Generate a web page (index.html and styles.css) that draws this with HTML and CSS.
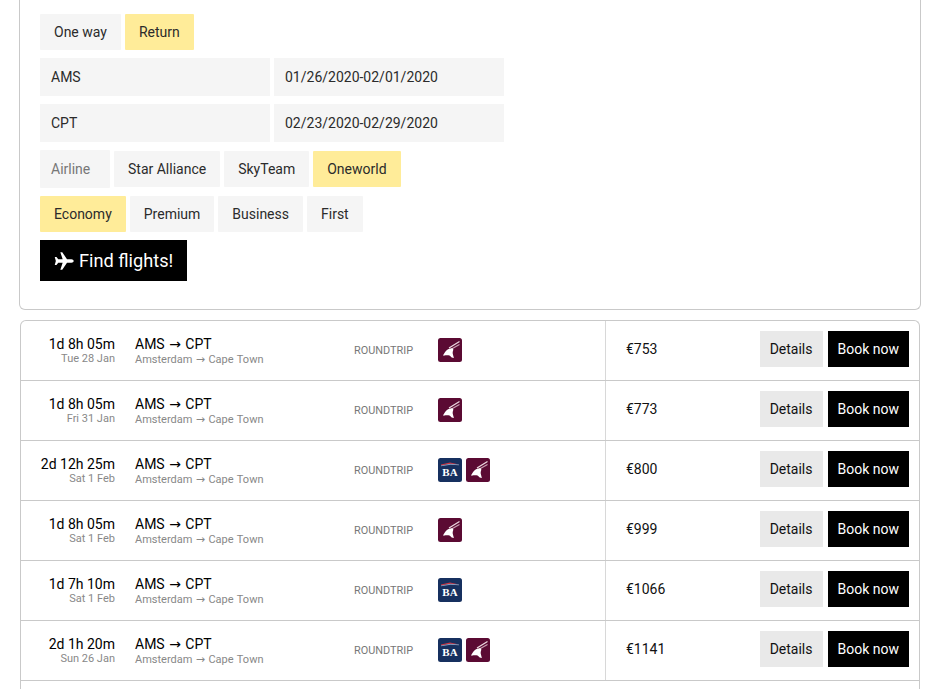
FILE: index.html
```html
<!DOCTYPE html>
<html lang="en">
<head>
<meta charset="utf-8">
<title>Find flights</title>
<link rel="stylesheet" href="styles.css">
</head>
<body>
<svg class="defs" width="0" height="0" aria-hidden="true">
  <symbol id="qr" viewBox="0 0 24 24">
    <rect width="24" height="24" rx="2.500" fill="#5b0a33"/>
    <path d="M11 10 21.500 3.500" stroke="#ecd8e0" stroke-width="1.300" fill="none"/>
    <path d="M13.500 11 21.500 6.500" stroke="#c9a3b4" stroke-width="1.100" fill="none"/>
    <path d="M5 17.500C6 15.500 7.500 13 9 12c1.500-1.200 3.500-2 5-1.800 1.200.2 1.600 1 1.200 2-.5 1.200-.7 2.500-.3 4 .3 1.300.7 2.500 1 3.800l-2.200-.5c-.7-.8-1.200-1.500-2.200-2-1-.4-2-.3-3-.3-.7 0-1.300.2-2 .4-.6.1-1 0-1.500-.1Z" fill="#fff"/>
  </symbol>
  <symbol id="ba" viewBox="0 0 24 24">
    <rect width="24" height="24" rx="2.500" fill="#16305f"/>
    <path d="M3 6.500 12 4.500 21 6.500 12.500 5.800 3 7.500Z" fill="#d0343f"/>
    <path d="M3 7.500 12.500 5.800 21 6.500v.8L12.500 6.800 3 8.300Z" fill="#8fa3c4"/>
  </symbol>
</svg>

<section class="search">
  <div class="chips">
    <span class="chip">One way</span>
    <span class="chip on">Return</span>
  </div>
  <div class="fields">
    <span class="field">AMS</span>
    <span class="field date">01/26/2020-02/01/2020</span>
  </div>
  <div class="fields">
    <span class="field">CPT</span>
    <span class="field date">02/23/2020-02/29/2020</span>
  </div>
  <div class="chips tall">
    <span class="chip label">Airline</span>
    <span class="chip">Star Alliance</span>
    <span class="chip">SkyTeam</span>
    <span class="chip on">Oneworld</span>
  </div>
  <div class="chips">
    <span class="chip on">Economy</span>
    <span class="chip">Premium</span>
    <span class="chip">Business</span>
    <span class="chip">First</span>
  </div>
  <button class="find" type="button">
    <svg class="plane" viewBox="0 0 24 24" aria-hidden="true"><path d="M23.600 12c0-1.100-1.300-2-2.700-2h-5.300L9.900 1.400H7.600l2.800 8.600H5.100L3 7.300H.9L2.200 12 .9 16.700H3L5.100 14h5.300l-2.800 8.600h2.300l5.700-8.600h5.300c1.400 0 2.700-.9 2.700-2Z" fill="#fff"/></svg>
    Find flights!
  </button>
</section>

<section class="results">
  <article class="row">
    <div class="time"><div class="dur">1d 8h 05m</div><div class="day">Tue 28 Jan</div></div>
    <div class="route"><div class="codes">AMS → CPT</div><div class="cities">Amsterdam → Cape Town</div></div>
    <div class="kind">ROUNDTRIP</div>
    <div class="logos"><svg class="logo"><use href="#qr"/></svg></div>
    <div class="price"><span class="amount">€753</span></div>
    <div class="actions"><span class="details">Details</span><span class="book">Book now</span></div>
  </article>
  <article class="row">
    <div class="time"><div class="dur">1d 8h 05m</div><div class="day">Fri 31 Jan</div></div>
    <div class="route"><div class="codes">AMS → CPT</div><div class="cities">Amsterdam → Cape Town</div></div>
    <div class="kind">ROUNDTRIP</div>
    <div class="logos"><svg class="logo"><use href="#qr"/></svg></div>
    <div class="price"><span class="amount">€773</span></div>
    <div class="actions"><span class="details">Details</span><span class="book">Book now</span></div>
  </article>
  <article class="row">
    <div class="time"><div class="dur">2d 12h 25m</div><div class="day">Sat 1 Feb</div></div>
    <div class="route"><div class="codes">AMS → CPT</div><div class="cities">Amsterdam → Cape Town</div></div>
    <div class="kind">ROUNDTRIP</div>
    <div class="logos"><span class="ba"><svg class="logo"><use href="#ba"/></svg><span class="ba-text">BA</span></span><svg class="logo"><use href="#qr"/></svg></div>
    <div class="price"><span class="amount">€800</span></div>
    <div class="actions"><span class="details">Details</span><span class="book">Book now</span></div>
  </article>
  <article class="row">
    <div class="time"><div class="dur">1d 8h 05m</div><div class="day">Sat 1 Feb</div></div>
    <div class="route"><div class="codes">AMS → CPT</div><div class="cities">Amsterdam → Cape Town</div></div>
    <div class="kind">ROUNDTRIP</div>
    <div class="logos"><svg class="logo"><use href="#qr"/></svg></div>
    <div class="price"><span class="amount">€999</span></div>
    <div class="actions"><span class="details">Details</span><span class="book">Book now</span></div>
  </article>
  <article class="row">
    <div class="time"><div class="dur">1d 7h 10m</div><div class="day">Sat 1 Feb</div></div>
    <div class="route"><div class="codes">AMS → CPT</div><div class="cities">Amsterdam → Cape Town</div></div>
    <div class="kind">ROUNDTRIP</div>
    <div class="logos"><span class="ba"><svg class="logo"><use href="#ba"/></svg><span class="ba-text">BA</span></span></div>
    <div class="price"><span class="amount">€1066</span></div>
    <div class="actions"><span class="details">Details</span><span class="book">Book now</span></div>
  </article>
  <article class="row">
    <div class="time"><div class="dur">2d 1h 20m</div><div class="day">Sun 26 Jan</div></div>
    <div class="route"><div class="codes">AMS → CPT</div><div class="cities">Amsterdam → Cape Town</div></div>
    <div class="kind">ROUNDTRIP</div>
    <div class="logos"><span class="ba"><svg class="logo"><use href="#ba"/></svg><span class="ba-text">BA</span></span><svg class="logo"><use href="#qr"/></svg></div>
    <div class="price"><span class="amount">€1141</span></div>
    <div class="actions"><span class="details">Details</span><span class="book">Book now</span></div>
  </article>
  <article class="row"></article>
</section>
</body>
</html>
```

FILE: styles.css
```css
* { box-sizing: border-box; }
html, body { margin: 0; padding: 0; height: 689px; overflow: hidden; background: #fff; }
body { font-family: Roboto, "DejaVu Sans", sans-serif; color: #222; font-size: 14px; }
.defs { position: absolute; }

.search {
  width: 902px;
  height: 310px;
  margin: 0 0 10px 19px;
  padding: 14px 20px 0;
  border: 1px solid #c9c9c9;
  border-top: 0;
  border-radius: 0 0 6px 6px;
}
.chips { display: flex; gap: 4px; height: 36px; margin-bottom: 8px; }
.chips.tall { height: 38px; align-items: center; }
.chip {
  display: flex;
  align-items: center;
  height: 36px;
  padding: 0 14px;
  background: #f5f5f5;
  border-radius: 1px;
  color: #2b2b2b;
  font-size: 14px;
}
.chip.on { background: #ffec99; }
.chip.label { width: 70px; height: 38px; padding: 0 0 0 11px; color: #777; }
.fields { display: flex; gap: 4px; margin-bottom: 8px; }
.field {
  display: flex;
  align-items: center;
  width: 230px;
  height: 38px;
  padding: 0 11px;
  background: #f5f5f5;
  color: #2b2b2b;
  font-size: 14px;
}
.find {
  display: flex;
  align-items: center;
  gap: 5px;
  width: 147px;
  height: 41px;
  padding: 0 0 0 14px;
  border: 0;
  background: #000;
  color: #fff;
  font: 400 18.200px Roboto, sans-serif;
}
.plane { width: 20px; height: 20px; flex: none; }

.results {
  width: 900px;
  height: 380px;
  margin-left: 20px;
  border: 1px solid #c9c9c9;
  border-bottom: 0;
  border-radius: 6px 6px 0 0;
  overflow: hidden;
}
.row {
  display: flex;
  align-items: center;
  height: 60px;
  border-bottom: 1px solid #c9c9c9;
}
.time { width: 94px; text-align: right; }
.dur { color: #000; font-size: 14px; line-height: 16px; }
.day { color: #888; font-size: 11px; line-height: 14px; }
.route { width: 219px; margin-left: 20px; }
.codes { color: #000; font-size: 14px; line-height: 16px; word-spacing: 1px; }
.cities { color: #888; font-size: 11px; line-height: 13px; margin-top: 1px; word-spacing: .7px; }
.kind { width: 84px; color: #777; font-size: 10.900px; }
.logos { display: flex; gap: 4px; width: 167px; margin-bottom: 2px; }
.logo { display: block; width: 24px; height: 24px; }
.ba { position: relative; display: block; width: 24px; height: 24px; }
.ba-text {
  position: absolute;
  left: 0;
  right: 0;
  top: 8.500px;
  color: #fff;
  font: 700 11px/12px "Liberation Serif", serif;
  text-align: center;
}
.price {
  align-self: stretch;
  display: flex;
  align-items: center;
  flex: 1;
  padding: 0 0 3px 20px;
  border-left: 1px solid #d8d8d8;
}
.amount { color: #111; font-size: 14px; }
.actions { display: flex; gap: 5px; padding-right: 10px; margin-bottom: 3px; }
.details, .book {
  display: flex;
  align-items: center;
  height: 36px;
  font-size: 14px;
}
.details { padding: 0 10px; background: #e9e9e9; color: #111; }
.book { padding: 0 10px; background: #000; color: #fff; }
```
